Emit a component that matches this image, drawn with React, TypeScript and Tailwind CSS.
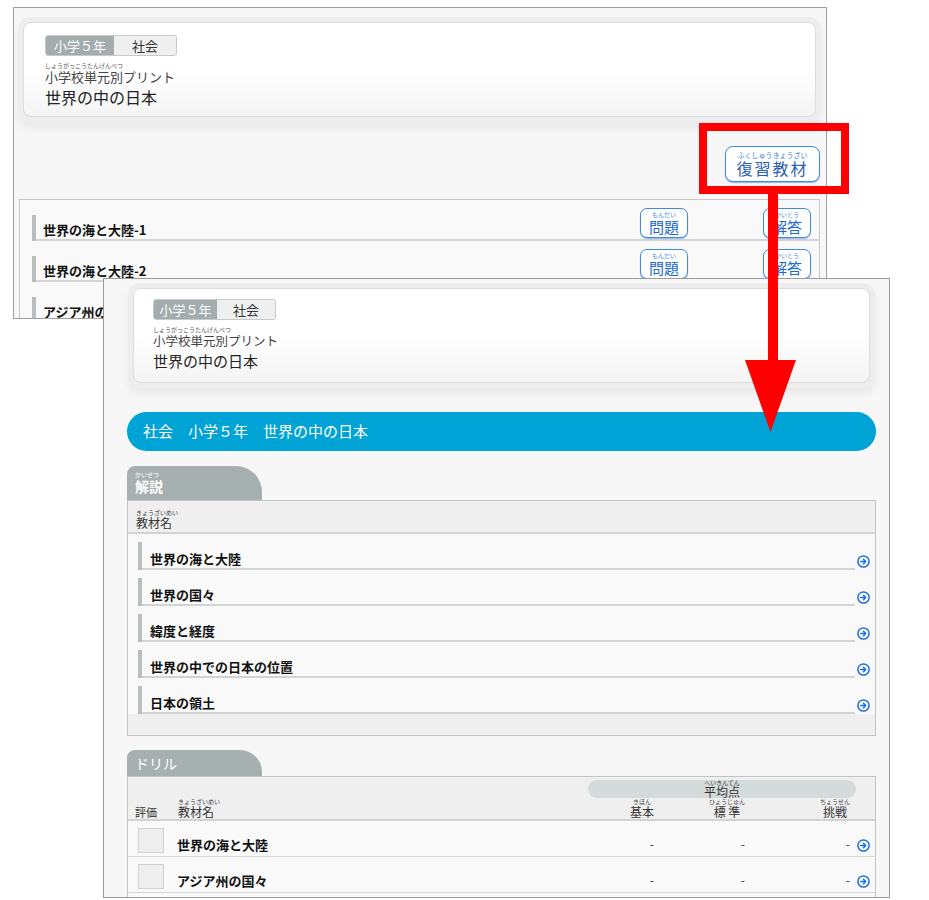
import React from "react";

function Go() {
  return (
    <svg width="13" height="13" viewBox="0 0 13 13" className="block">
      <circle cx="6.5" cy="6.5" r="5.6" fill="#fff" stroke="#1a6fdc" strokeWidth="1.5" />
      <path d="M3.7 6.5h4.8M6.5 4.3l2.2 2.2-2.2 2.2" stroke="#1a6fdc" strokeWidth="1.6" fill="none" strokeLinecap="round" strokeLinejoin="round" />
    </svg>
  );
}

function HeaderCard({ big }: { big: boolean }) {
  return (
    <div className="rounded-[12px] bg-[#ededed] p-[5px] shadow-[0_6px_8px_rgba(0,0,0,0.06)]">
      <div
        className={
          big
            ? "h-[95px] rounded-[8px] border border-[#dcdcdc] bg-gradient-to-b from-white via-white to-[#f4f4f4] pl-[21px] pt-[12px]"
            : "h-[95px] rounded-[8px] border border-[#dcdcdc] bg-gradient-to-b from-white via-white to-[#f4f4f4] pl-[19px] pt-[10px]"
        }
      >
        <div className="flex h-[21px] w-fit overflow-hidden rounded-[3px] border border-[#c4c9c9] text-[13px] leading-none">
          <div className={big ? "flex w-[68px] items-center justify-center bg-[#a4adad] text-white" : "flex w-[63px] items-center justify-center bg-[#a4adad] text-white"}>
            小学５年
          </div>
          <div className={big ? "flex w-[62px] items-center justify-center bg-[#efefef] text-[#333]" : "flex w-[58px] items-center justify-center bg-[#efefef] text-[#333]"}>
            社会
          </div>
        </div>
        <div className="mt-[6px] text-[6px] leading-[7px] text-[#555]">しょうがっこうたんげんべつ</div>
        <div className={big ? "text-[13px] leading-[15px] text-[#444]" : "text-[12.5px] leading-[15px] text-[#444]"}>小学校単元別プリント</div>
        <div className={big ? "mt-[4px] text-[16px] leading-[18px] text-[#222]" : "mt-[4px] text-[15px] leading-[18px] text-[#222]"}>世界の中の日本</div>
      </div>
    </div>
  );
}

function SmallBtn({ furi, label }: { furi: string; label: string }) {
  return (
    <div className="flex h-[30px] w-[48px] flex-col items-center justify-center rounded-[7px] border-[1.5px] border-[#3d8be0] bg-white leading-none shadow-[0_1px_1px_rgba(40,100,200,0.45)]">
      <span className="text-[6px] leading-[7px] text-[#3a7fd6]">{furi}</span>
      <span className="text-[15px] leading-[17px] text-[#1e6ad0]">{label}</span>
    </div>
  );
}

function Row1({ name, buttons }: { name: string; buttons: boolean }) {
  return (
    <div className="flex h-[41px] items-end pl-[12px]">
      <div className="flex h-[26px] flex-1 items-end border-l-[4px] border-[#b8bebe]">
        <div className="flex h-full flex-1 items-end justify-between border-b-[2px] border-[#d4d4d4]">
          <span className="pb-[1px] pl-[7px] text-[13px] font-bold leading-[16px] text-[#111]">{name}</span>
          {buttons ? (
            <div className="mb-[1px] mr-[8px] flex gap-[75px]">
              <SmallBtn furi="もんだい" label="問題" />
              <SmallBtn furi="かいとう" label="解答" />
            </div>
          ) : null}
        </div>
      </div>
    </div>
  );
}

function Row2({ name }: { name: string }) {
  return (
    <div className="flex h-[36px] items-end pl-[10px] pr-[5px]">
      <div className="flex h-[28px] flex-1 items-end border-l-[4px] border-[#b8bebe]">
        <div className="flex h-full flex-1 items-end border-b-[2px] border-[#d2d4d4]">
          <span className="pb-[1px] pl-[8px] text-[13px] font-bold leading-[16px] text-[#111]">{name}</span>
        </div>
      </div>
      <div className="mb-[2px] ml-[2px]">
        <Go />
      </div>
    </div>
  );
}

function DrillRow({ name }: { name: string }) {
  return (
    <div className="flex h-[36px] items-end border-b border-[#d6d8d8] pb-[3px] pr-[5px]">
      <div className="ml-[10px] h-[25px] w-[26px] border border-[#cfd2d2] bg-[#eeeeee]" />
      <span className="ml-[13px] flex-1 text-[13px] font-bold leading-[16px] text-[#111]">{name}</span>
      <span className="mb-[1px] w-[80px] text-right text-[12px] leading-[16px] text-[#333]">-</span>
      <span className="mb-[1px] w-[91px] text-right text-[12px] leading-[16px] text-[#333]">-</span>
      <span className="mb-[1px] w-[105px] text-right text-[12px] leading-[16px] text-[#333]">-</span>
      <div className="mb-[1px] ml-[7px]">
        <Go />
      </div>
    </div>
  );
}

function Head({ furi, label, w }: { furi: string; label: string; w: string }) {
  return (
    <div className={w + " flex justify-end"}>
      <div className="flex flex-col items-center leading-none">
        <span className="text-[6px] leading-[7px] text-[#444]">{furi}</span>
        <span className="text-[12px] leading-[14px] text-[#333]">{label}</span>
      </div>
    </div>
  );
}

export default function App() {
  return (
    <div className="relative h-[900px] w-[929px] overflow-hidden bg-white font-['Noto_Sans_CJK_JP','Noto_Sans',sans-serif]">
      {/* Screenshot 1 */}
      <div className="absolute left-[13px] top-[7px] h-[312px] w-[814px] overflow-hidden border border-[#a0a0a0] bg-[#f7f7f7]">
        <div className="pl-[4px] pr-[5px] pt-[9px]">
          <HeaderCard big={true} />
          <div className="mt-[24px] flex justify-end pr-[1px]">
            <div className="flex h-[36px] w-[95px] flex-col items-center justify-center rounded-[8px] border-[1.5px] border-[#3d8be0] bg-white leading-none shadow-[0_1px_1px_rgba(40,100,200,0.45)]">
              <span className="text-[7px] leading-[8px] text-[#3a7fd6]">ふくしゅうきょうざい</span>
              <span className="text-[16px] leading-[19px] tracking-[2px] text-[#2a5cb0]">復習教材</span>
            </div>
          </div>
          <div className="mx-[1px] mt-[17px] border border-[#c9c9c9] bg-[#f9f9f9]">
            <Row1 name="世界の海と大陸-1" buttons={true} />
            <Row1 name="世界の海と大陸-2" buttons={true} />
            <Row1 name="アジア州の国々" buttons={false} />
          </div>
        </div>
      </div>

      {/* Screenshot 2 */}
      <div className="absolute left-[103px] top-[278px] h-[620px] w-[787px] overflow-hidden border border-[#9a9a9a] bg-[#f7f7f7]">
        <div className="pl-[23px] pr-[13px] pt-[4px]">
          <div className="mx-[1px]">
            <HeaderCard big={false} />
          </div>
          <div className="mt-[24px] flex h-[39px] items-center rounded-full bg-[#00a3d6] pl-[16px] text-[15px] text-white">
            社会　小学５年　世界の中の日本
          </div>

          {/* 解説 */}
          <div className="mt-[15px] h-[34px] w-[135px] rounded-tl-[8px] rounded-tr-[26px] bg-[#a7b0b0] pl-[8px] pt-[5px] leading-none text-white">
            <div className="text-[6px] leading-[7px]">かいせつ</div>
            <div className="text-[14px] font-bold leading-[16px]">解説</div>
          </div>
          <div className="border border-[#bfc5c5] bg-[#f9f9f9]">
            <div className="flex h-[33px] flex-col justify-end border-b-2 border-[#cfd3d3] bg-[#efefef] pb-[2px] pl-[8px]">
              <span className="text-[6px] leading-[7px] text-[#444]">きょうざいめい</span>
              <span className="text-[12px] leading-[14px] text-[#333]">教材名</span>
            </div>
            <Row2 name="世界の海と大陸" />
            <Row2 name="世界の国々" />
            <Row2 name="緯度と経度" />
            <Row2 name="世界の中での日本の位置" />
            <Row2 name="日本の領土" />
            <div className="h-[21px] bg-[#efefef]" />
          </div>

          {/* ドリル */}
          <div className="mt-[14px] flex h-[26px] w-[135px] items-center rounded-tl-[8px] rounded-tr-[22px] bg-[#a7b0b0] pl-[8px] text-[14px] text-white">
            ドリル
          </div>
          <div className="border border-[#bfc5c5] bg-[#f9f9f9]">
            <div className="flex h-[44px] flex-col border-b-2 border-[#cfd3d3] bg-[#efefef]">
              <div className="flex justify-end pr-[19px] pt-[3px]">
                <div className="flex h-[18px] w-[268px] flex-col items-center justify-center rounded-full bg-[#d3dbdb] leading-none">
                  <span className="text-[6px] leading-[6px] text-[#444]">へいきんてん</span>
                  <span className="text-[12px] leading-[12px] text-[#333]">平均点</span>
                </div>
              </div>
              <div className="flex flex-1 items-end pb-[1px] pr-[5px]">
                <span className="ml-[7px] w-[43px] text-[11px] leading-[14px] text-[#333]">評価</span>
                <div className="flex flex-1 flex-col leading-none">
                  <span className="text-[6px] leading-[7px] text-[#444]">きょうざいめい</span>
                  <span className="text-[12px] leading-[14px] text-[#333]">教材名</span>
                </div>
                <Head furi="きほん" label="基本" w="w-[80px]" />
                <Head furi="ひょうじゅん" label="標 準" w="w-[91px]" />
                <Head furi="ちょうせん" label="挑戦" w="w-[105px]" />
                <div className="ml-[7px] w-[13px]" />
              </div>
            </div>
            <DrillRow name="世界の海と大陸" />
            <DrillRow name="アジア州の国々" />
            <div className="h-[36px]" />
          </div>
        </div>
      </div>

      {/* Red annotation */}
      <div className="absolute left-[699px] top-[123px] h-[71px] w-[150px] border-[8px] border-[#ff0000]" />
      <svg className="absolute left-[740px] top-[190px]" width="60" height="245" viewBox="0 0 60 245">
        <rect x="28" y="2" width="10" height="170" fill="#ff0000" />
        <polygon points="5,170 56,170 30.5,242" fill="#ff0000" />
      </svg>
    </div>
  );
}
